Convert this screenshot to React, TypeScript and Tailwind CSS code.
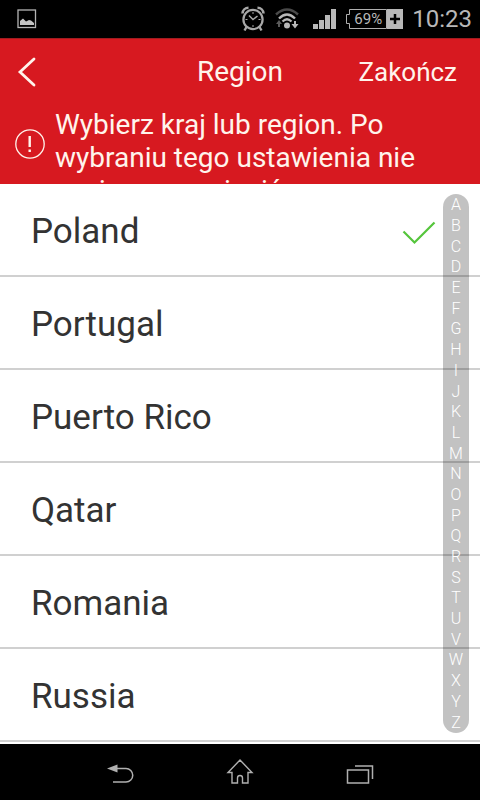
import React, { useState } from "react";

const REGIONS: string[] = ["Poland", "Portugal", "Puerto Rico", "Qatar", "Romania", "Russia"];
const LETTERS: string[] = "ABCDEFGHIJKLMNOPQRSTUVWXYZ".split("");

function StatusBar() {
  return (
    <div className="flex h-[38px] shrink-0 items-center bg-black pr-2 pl-[17px] text-[#b8b8b8]">
      <svg width="20" height="20" viewBox="0 0 20 20" aria-hidden="true">
        <rect x="1" y="1" width="17.5" height="17.5" fill="none" stroke="#b4b4b4" strokeWidth="1.3" />
        <path d="M3 16V12L6 9.5L9 12.5L12 11L14 11.5L17 14V16Z" fill="#c4c4c4" />
      </svg>
      <div className="ml-auto flex items-center">
        <svg width="24" height="26" viewBox="0 0 24 26" fill="none" stroke="#a8a8a8" aria-hidden="true">
          <circle cx="12" cy="13.5" r="9.6" strokeWidth="2.2" />
          <path d="M1.5 7.5A6 6 0 0 1 7.5 1.8M22.5 7.5A6 6 0 0 0 16.5 1.8" strokeWidth="2.6" />
          <path d="M5.5 21L3.5 24.5M18.5 21L20.5 24.5" strokeWidth="2.4" />
          <path d="M8 9.5L12 13.5L16.5 10" strokeWidth="1.5" />
          <path d="M12 6V8M12 19V21M4.5 13.5H6.5M17.5 13.5H19.5" strokeWidth="1" />
        </svg>
        <svg className="ml-2.5" width="24" height="22" viewBox="0 0 24 22" fill="none" aria-hidden="true">
          <path d="M1 6.5Q12 -3.5 23 6.5" stroke="#4a4a4a" strokeWidth="2.4" />
          <path d="M4 10.5Q12 2.5 20 10.5" stroke="#b8b8b8" strokeWidth="2.4" />
          <path d="M7.5 13.5Q12 9 16.5 13.5" stroke="#b8b8b8" strokeWidth="2.2" />
          <circle cx="12" cy="17.5" r="3" fill="#b8b8b8" />
          <path d="M1 16L4 12L7 16H5V19H3V16Z" fill="#5a5a5a" />
          <path d="M19 13H21V16H23.5L20 20.5L16.5 16H19Z" fill="#b8b8b8" />
        </svg>
        <svg className="ml-3.5" width="24" height="20" viewBox="0 0 24 20" fill="#b8b8b8" aria-hidden="true">
          <path d="M0 15H5V20H0ZM6 11H11V20H6ZM12 6H17V20H12ZM18 0H23V20H18Z" />
        </svg>
        <div className="relative ml-2 flex h-5 w-[59px] items-center">
          <svg className="absolute inset-0" width="59" height="20" viewBox="0 0 59 20" aria-hidden="true">
            <path d="M4.5 .5H41.5V19.5H4.5V14.5H1.5V5.5H4.5Z" fill="none" stroke="#b0b0b0" />
            <rect x="42" width="16" height="20" fill="#b8b8b8" />
            <path d="M50 5V15M45 10H55" stroke="#000" strokeWidth="2.5" />
          </svg>
          <span className="relative w-[42px] pl-1 text-center text-[15px] leading-5">69%</span>
        </div>
        <time className="ml-2 text-2xl leading-8">10:23</time>
      </div>
    </div>
  );
}

function Header() {
  return (
    <header className="grid h-[68px] shrink-0 grid-cols-[1fr_auto_1fr] items-center border-t border-[#a01c20] bg-[#d71920] pb-0.5 leading-8 text-[#fff4ec]">
      <button type="button" aria-label="Back" className="ml-[11px] flex size-8 items-center justify-center justify-self-start">
        <svg width="20" height="30" viewBox="0 0 20 30" fill="none" aria-hidden="true">
          <path d="M17 2L3 15L17 28" stroke="currentColor" strokeWidth="2.8" strokeLinecap="round" />
        </svg>
      </button>
      <h1 className="text-[28px]">Region</h1>
      <button type="button" className="mr-[23px] justify-self-end text-[26px]">Zakończ</button>
    </header>
  );
}

function Notice() {
  return (
    <div className="flex h-[78px] shrink-0 gap-2.5 overflow-hidden bg-[#d71920] pr-10 pl-[15px] text-[#fff4ec]">
      <svg className="mt-[23px] shrink-0" width="30" height="30" viewBox="0 0 30 30" fill="none" stroke="currentColor" aria-hidden="true">
        <circle cx="15" cy="15" r="14.2" strokeWidth="1.3" />
        <path d="M14.7 7V18M14.7 20.5V23" strokeWidth="2.4" />
      </svg>
      <p className="pt-0.5 text-[28px] leading-[33px]">
        Wybierz kraj lub region. Po wybraniu tego ustawienia nie można go zmienić.
      </p>
    </div>
  );
}

function NavigationBar() {
  return (
    <nav className="flex h-14 shrink-0 items-center justify-center gap-[88px] bg-black text-[#b0b0b0]">
      <button type="button" aria-label="Back">
        <svg width="32" height="32" viewBox="0 0 32 32" fill="none" stroke="currentColor" strokeWidth="1.5" aria-hidden="true">
          <path d="M13 12.5H22A6.7 6.7 0 0 1 22 26H9" />
          <path d="M3 12.5L13.5 8.5V16.5Z" fill="currentColor" stroke="none" />
        </svg>
      </button>
      <button type="button" aria-label="Home">
        <svg width="32" height="32" viewBox="0 0 32 32" fill="none" stroke="currentColor" strokeWidth="1.4" aria-hidden="true">
          <path d="M16 4L28 16.5H24V27H18.5V22A2.5 2.5 0 0 0 13.5 22V27H8V16.5H4Z" />
        </svg>
      </button>
      <button type="button" aria-label="Recent apps">
        <svg width="32" height="32" viewBox="0 0 32 32" fill="none" stroke="currentColor" strokeWidth="1.5" aria-hidden="true">
          <rect x="3.5" y="14" width="21" height="13" />
          <path d="M11 10H28.5V23" />
        </svg>
      </button>
    </nav>
  );
}

export default function App() {
  const [selected, setSelected] = useState("Poland");

  return (
    <div className="flex h-screen flex-col bg-white font-['Roboto',sans-serif]">
      <StatusBar />
      <Header />
      <Notice />
      <main className="relative min-h-0 flex-1 overflow-hidden">
        <ul>
          {REGIONS.map((region) => (
            <li key={region} className="border-b-2 border-[#d0d0d0]">
              <button
                type="button"
                aria-pressed={region === selected}
                onClick={() => setSelected(region)}
                className="flex h-[91px] w-full items-center justify-between pr-11 pl-[31px] text-left text-[35px] leading-10 text-[#333333]"
              >
                <span className="pt-1">{region}</span>
                {region === selected && (
                  <svg className="mt-1.5" width="34" height="24" viewBox="0 0 34 24" fill="none" aria-hidden="true">
                    <path d="M1.5 10.5L12.5 21.5L32.5 1.5" stroke="#55c53c" strokeWidth="2.2" />
                  </svg>
                )}
              </button>
            </li>
          ))}
        </ul>
        <div className="absolute top-2.5 right-[11px] bottom-[11px] flex w-[26px] flex-col rounded-full bg-black/24 pt-px text-base font-light text-white">
          {LETTERS.map((letter) => (
            <button key={letter} type="button" className="flex min-h-0 flex-1 items-center justify-center leading-5">
              {letter}
            </button>
          ))}
        </div>
      </main>
      <NavigationBar />
    </div>
  );
}
